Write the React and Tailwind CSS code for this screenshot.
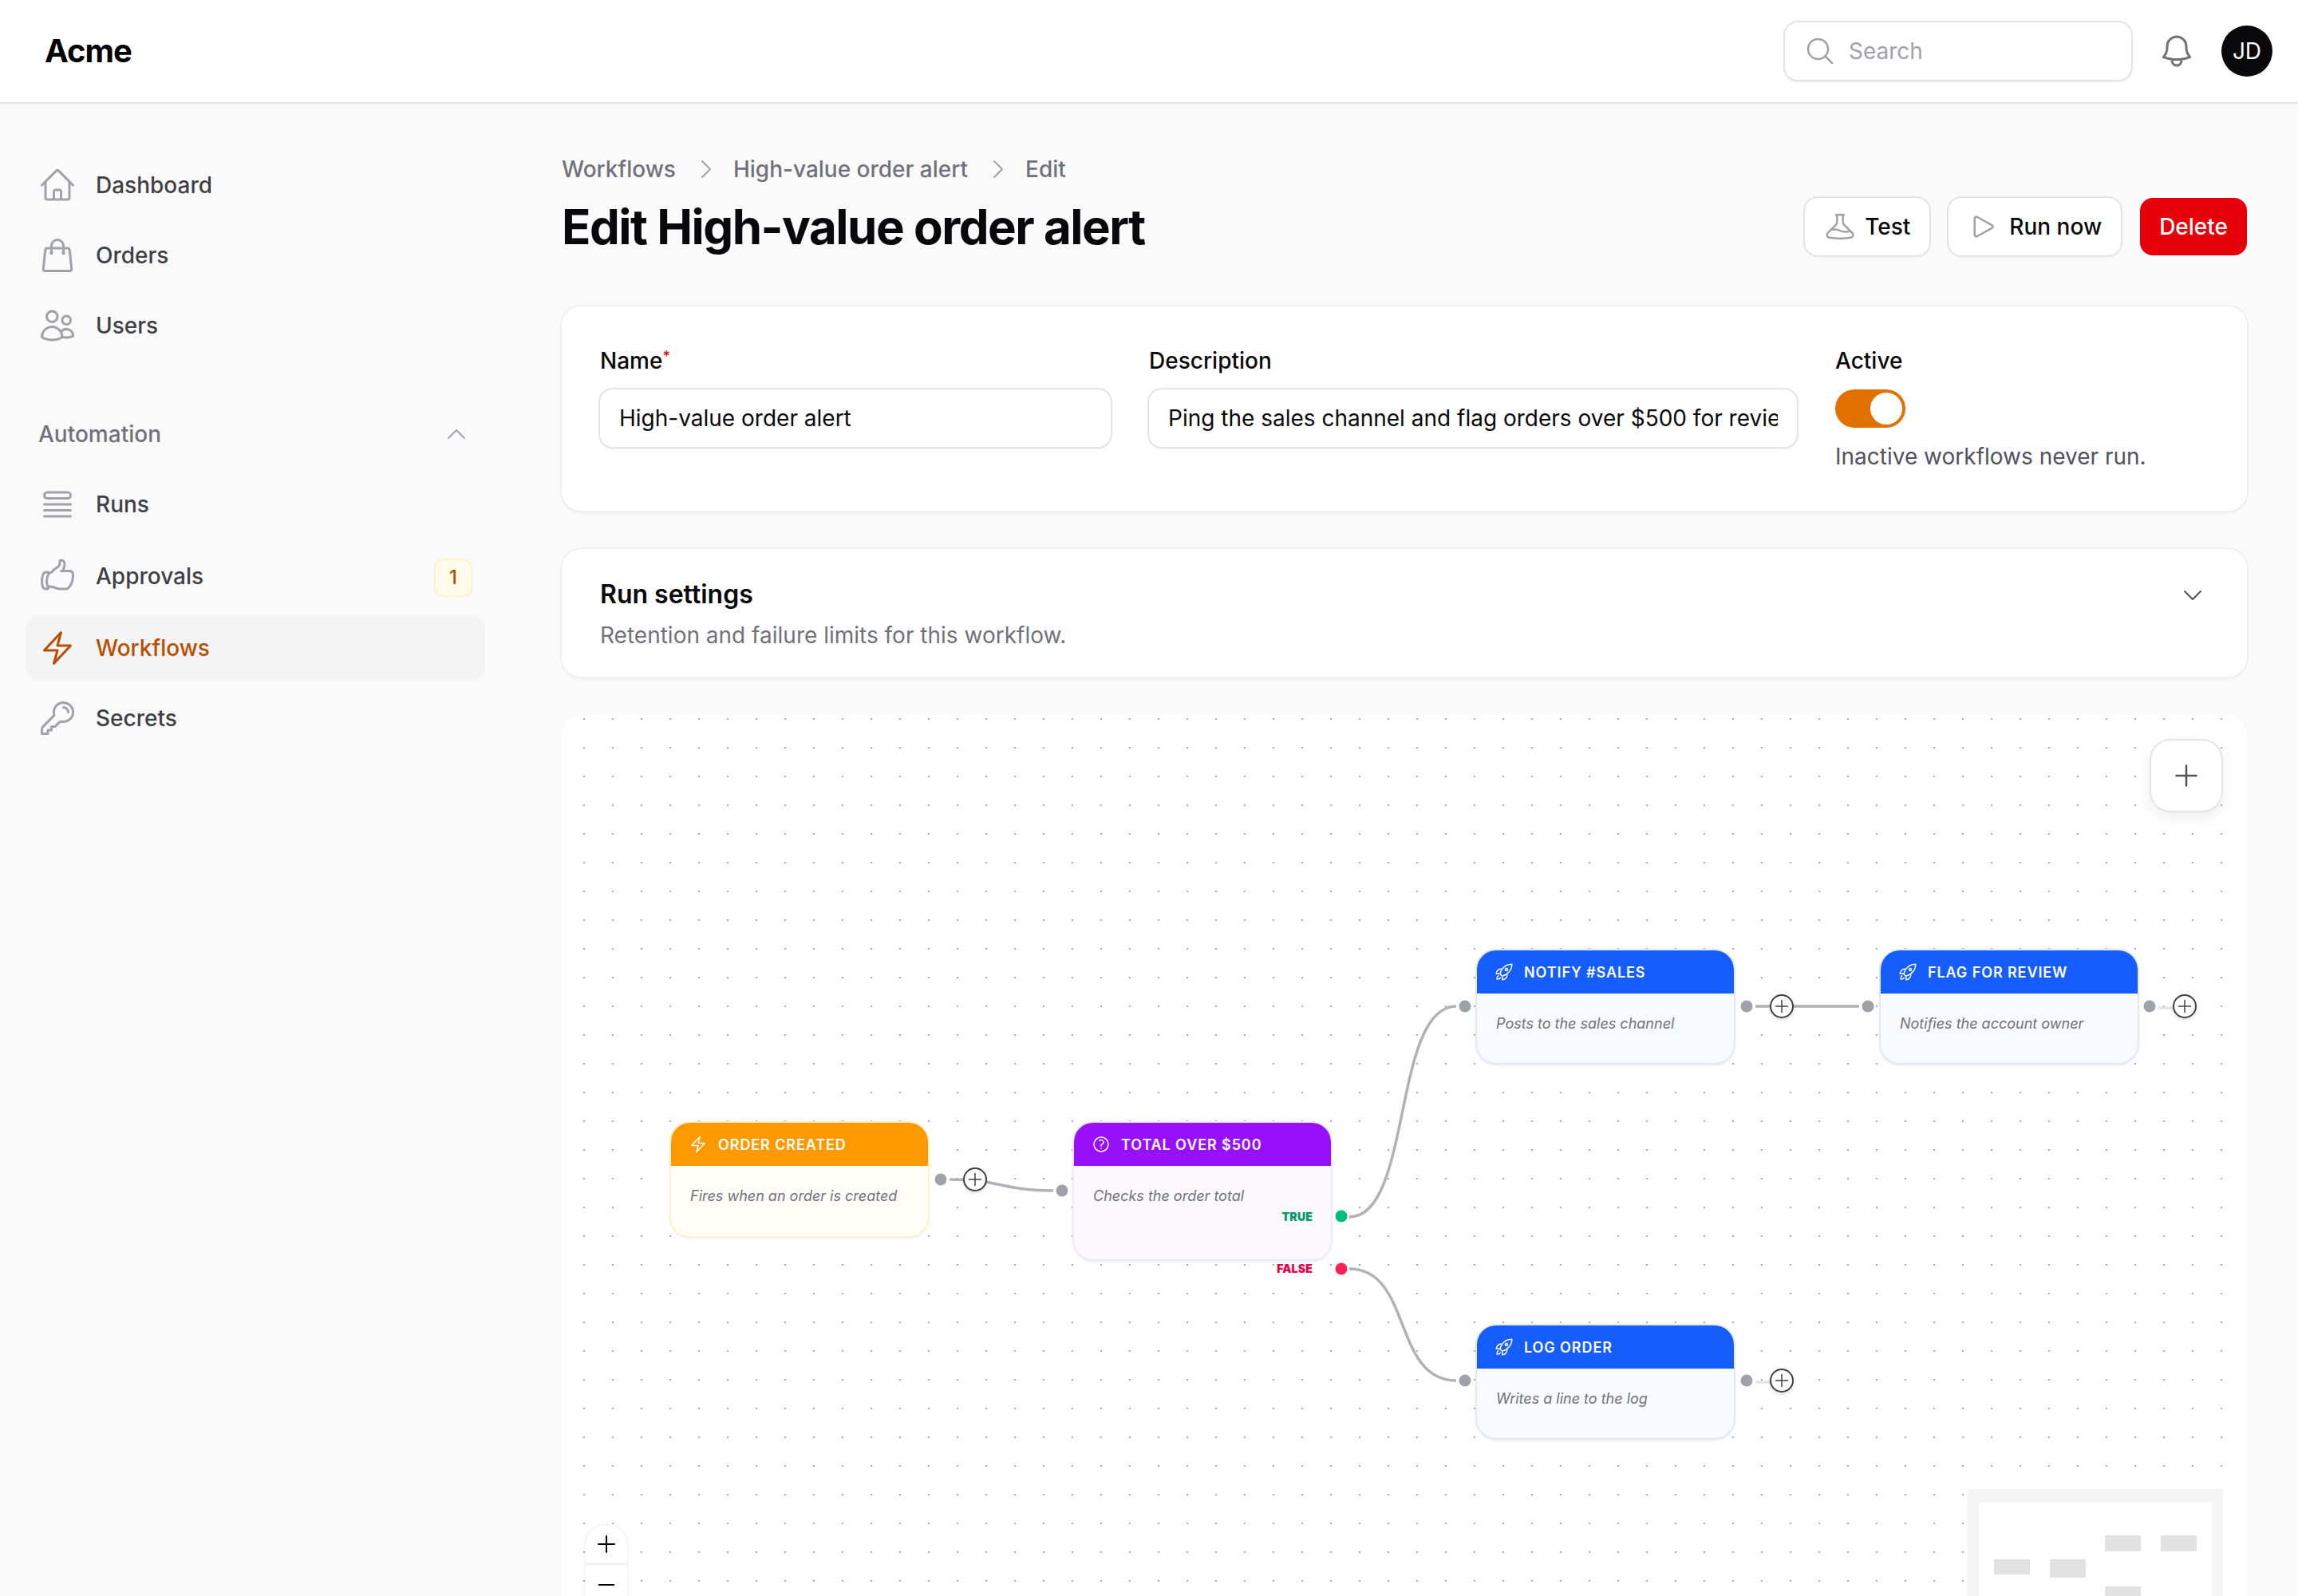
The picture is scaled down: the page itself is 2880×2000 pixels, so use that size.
import React from "react";
import {
  HiOutlineHome, HiOutlineShoppingBag, HiOutlineUsers, HiOutlineQueueList, HiOutlineHandThumbUp,
  HiOutlineBolt, HiOutlineKey, HiOutlineChevronUp, HiOutlineChevronDown, HiOutlineChevronRight,
  HiOutlineMagnifyingGlass, HiOutlineBell, HiOutlineBeaker, HiOutlinePlay, HiOutlineRocketLaunch,
  HiOutlineQuestionMarkCircle, HiOutlinePlus, HiOutlineMinus,
} from "react-icons/hi2";

function NavRow({ icon: Icon, label, active, badge, tall }) {
  return (
    <div className={`flex items-center gap-[24px] rounded-[16px] px-[16px] ${tall ? "h-[84px]" : "h-[80px]"} ${active ? "bg-[#f4f4f5] text-[#bb4d00]" : "text-[#3f3f46]"}`}>
      <Icon className={`h-[48px] w-[48px] shrink-0 ${active ? "text-[#bb4d00]" : "text-[#a1a1aa]"}`} />
      <span className="flex-1 text-[28px] font-medium leading-[40px]">{label}</span>
      {badge && (
        <span className="mr-[2px] mt-[4px] flex h-[44px] w-[44px] items-center justify-center rounded-[10px] bg-[#fffbeb] text-[24px] font-medium text-[#bb4d00] shadow-[0_0_0_2px_#fef3c6]">{badge}</span>
      )}
    </div>
  );
}

function Sidebar() {
  return (
    <aside className="flex w-[640px] shrink-0 flex-col gap-[8px] px-[32px] pt-[62px]">
      <NavRow icon={HiOutlineHome} label="Dashboard" />
      <NavRow icon={HiOutlineShoppingBag} label="Orders" />
      <NavRow icon={HiOutlineUsers} label="Users" />
      <div className="mt-[60px] flex h-[56px] items-center justify-between pl-[16px] pr-[20px] text-[28px] font-medium text-[#71717a]">
        <span>Automation</span>
        <HiOutlineChevronUp className="h-[32px] w-[32px] text-[#a1a1aa]" />
      </div>
      <div className="mt-[12px] flex flex-col gap-[8px]">
        <NavRow icon={HiOutlineQueueList} label="Runs" />
        <NavRow icon={HiOutlineHandThumbUp} label="Approvals" badge="1" tall />
        <NavRow icon={HiOutlineBolt} label="Workflows" active />
        <NavRow icon={HiOutlineKey} label="Secrets" />
      </div>
    </aside>
  );
}

function Node({ left, top, height, title, icon: Icon, text, header, body, ring }) {
  return (
    <div
      className={`absolute w-[322px] overflow-hidden rounded-[24px] ${body} ${ring}`}
      style={{ left, top, height }}
    >
      <div className={`flex h-[54px] items-center gap-[13px] px-[22px] text-white ${header}`}>
        <Icon className="h-[24px] w-[24px] shrink-0" />
        <span className="text-[18px] font-semibold uppercase tracking-[0.9px]">{title}</span>
      </div>
      <p className="px-[24px] pt-[26px] text-[18px] italic leading-[24px] text-[#71717a]">{text}</p>
    </div>
  );
}

const Dot = ({ x, y, color = "bg-[#a1a1aa]" }) => (
  <span className={`absolute h-[15px] w-[15px] -translate-x-1/2 -translate-y-1/2 rounded-full ${color}`} style={{ left: x, top: y }} />
);

const AddBtn = ({ x, y }) => (
  <span
    className="absolute flex h-[30px] w-[30px] -translate-x-1/2 -translate-y-1/2 items-center justify-center rounded-full border-2 border-[#3f3f46] bg-white text-[#3f3f46] shadow-[0_2px_4px_rgba(0,0,0,0.15)]"
    style={{ left: x, top: y }}
  >
    <HiOutlinePlus className="h-[24px] w-[24px]" />
  </span>
);

function Canvas() {
  const ox = 704;
  const oy = 896;
  const X = (v) => v - ox;
  const Y = (v) => v - oy;
  const blueRing = "shadow-[0_0_0_2px_#e2e9f4,0_2px_4px_rgba(0,0,0,0.15)]";
  return (
    <section className="relative mt-[48px] min-h-0 flex-1 overflow-hidden rounded-t-[24px] bg-white bg-[radial-gradient(circle,#a8a8ae_1px,transparent_1.2px)] bg-[size:36px_36px] bg-[position:10px_23px]">
      <svg className="absolute inset-0 h-full w-full" fill="none" stroke="#b1b1b7" strokeWidth="3.5">
        <path d={`M${X(1190)} ${Y(1478)} C${X(1255)} ${Y(1478)} ${X(1255)} ${Y(1492)} ${X(1320)} ${Y(1492)}`} />
        <path d={`M${X(1691)} ${Y(1525)} C${X(1770)} ${Y(1525)} ${X(1745)} ${Y(1261)} ${X(1825)} ${Y(1261)}`} />
        <path d={`M${X(1691)} ${Y(1590)} C${X(1770)} ${Y(1590)} ${X(1745)} ${Y(1730)} ${X(1825)} ${Y(1730)}`} />
        <path d={`M${X(2200)} ${Y(1261)} L${X(2330)} ${Y(1261)}`} />
        <path stroke="#e4e4e7" d={`M${X(2705)} ${Y(1263)} L${X(2725)} ${Y(1263)}`} />
        <path stroke="#e4e4e7" d={`M${X(2200)} ${Y(1732)} L${X(2220)} ${Y(1732)}`} />
      </svg>

      <Node left={X(841)} top={Y(1407)} height={142} title="Order created" icon={HiOutlineBolt} text="Fires when an order is created" header="bg-[#fe9a00]" body="bg-[#fffdf7]" ring="shadow-[0_0_0_2px_#fef3c6,0_2px_4px_rgba(0,0,0,0.15)]" />
      <Node left={X(1346)} top={Y(1407)} height={171} title="Total over $500" icon={HiOutlineQuestionMarkCircle} text="Checks the order total" header="bg-[#9810fa]" body="bg-[#fbf9ff]" ring="shadow-[0_0_0_2px_#ede9fe,0_2px_4px_rgba(0,0,0,0.15)]" />
      <Node left={X(1851)} top={Y(1191)} height={141} title="Notify #sales" icon={HiOutlineRocketLaunch} text="Posts to the sales channel" header="bg-[#155dfc]" body="bg-[#f7faff]" ring={blueRing} />
      <Node left={X(2357)} top={Y(1191)} height={141} title="Flag for review" icon={HiOutlineRocketLaunch} text="Notifies the account owner" header="bg-[#155dfc]" body="bg-[#f7faff]" ring={blueRing} />
      <Node left={X(1851)} top={Y(1661)} height={141} title="Log order" icon={HiOutlineRocketLaunch} text="Writes a line to the log" header="bg-[#155dfc]" body="bg-[#f7faff]" ring={blueRing} />

      <span className="absolute text-[14px] font-black leading-[16px] tracking-[0.2px] text-[#009966]" style={{ right: 2816 - 1645, top: Y(1517) }}>TRUE</span>
      <span className="absolute text-[14px] font-black leading-[16px] tracking-[0.2px] text-[#ec003f]" style={{ right: 2816 - 1645, top: Y(1582) }}>FALSE</span>

      <Dot x={X(1179)} y={Y(1478)} />
      <Dot x={X(1331)} y={Y(1492)} />
      <Dot x={X(1681)} y={Y(1524)} color="bg-[#00bc7d]" />
      <Dot x={X(1681)} y={Y(1590)} color="bg-[#ff2056]" />
      <Dot x={X(1836)} y={Y(1261)} />
      <Dot x={X(2189)} y={Y(1261)} />
      <Dot x={X(2341)} y={Y(1261)} />
      <Dot x={X(2694)} y={Y(1261)} />
      <Dot x={X(1836)} y={Y(1730)} />
      <Dot x={X(2189)} y={Y(1730)} />
      <AddBtn x={X(1222)} y={Y(1478)} />
      <AddBtn x={X(2233)} y={Y(1261)} />
      <AddBtn x={X(2738)} y={Y(1261)} />
      <AddBtn x={X(2233)} y={Y(1730)} />

      <button className="absolute right-[32px] top-[32px] flex h-[88px] w-[88px] items-center justify-center rounded-[24px] bg-white text-[#52525b] shadow-[0_0_0_2px_#e4e4e7,0_8px_20px_rgba(0,0,0,0.08)]">
        <HiOutlinePlus className="h-[40px] w-[40px]" />
      </button>

      <div className="absolute left-[30px] top-[1015px] flex w-[52px] flex-col overflow-hidden rounded-t-[24px] bg-white shadow-[0_0_4px_rgba(0,0,0,0.12)]">
        <div className="flex h-[50px] items-center justify-center border-b-2 border-[#eeeeee]"><HiOutlinePlus className="h-[32px] w-[32px] text-black" /></div>
        <div className="flex h-[50px] items-center justify-center"><HiOutlineMinus className="h-[32px] w-[32px] text-black" /></div>
      </div>

      <div className="absolute left-[1762px] top-[970px] h-[200px] w-[320px] bg-[#f5f5f5] px-[14px] pt-[17px]">
        <div className="relative h-full w-full bg-white">
          <span className="absolute left-[19px] top-[71px] h-[19px] w-[45px] rounded-[1px] bg-[#e2e2e2]" />
          <span className="absolute left-[89px] top-[71px] h-[23px] w-[45px] rounded-[1px] bg-[#e2e2e2]" />
          <span className="absolute left-[158px] top-[41px] h-[20px] w-[45px] rounded-[1px] bg-[#e2e2e2]" />
          <span className="absolute left-[228px] top-[41px] h-[20px] w-[45px] rounded-[1px] bg-[#e2e2e2]" />
          <span className="absolute left-[158px] top-[105px] h-[20px] w-[45px] rounded-[1px] bg-[#e2e2e2]" />
        </div>
      </div>
    </section>
  );
}

export default function App() {
  return (
    <div className="flex h-screen flex-col overflow-hidden bg-[#fafafa] font-['Inter',sans-serif] text-[#09090b] antialiased">
      <header className="flex h-[130px] shrink-0 items-center border-b-2 border-[#e4e4e7] bg-white pl-[56px] pr-[32px]">
        <span className="flex-1 text-[40px] font-bold tracking-[-1px] text-black">Acme</span>
        <div className="flex h-[72px] w-[434px] items-center gap-[16px] rounded-[16px] bg-white px-[24px] shadow-[0_0_0_2px_#e4e4e7,0_2px_3px_rgba(0,0,0,0.15)]">
          <HiOutlineMagnifyingGlass className="h-[40px] w-[40px] text-[#a1a1aa]" />
          <span className="text-[28px] text-[#a1a1aa]">Search</span>
        </div>
        <HiOutlineBell className="ml-[33px] h-[48px] w-[48px] text-[#71717a]" />
        <div className="ml-[32px] flex h-[64px] w-[64px] items-center justify-center rounded-full bg-[#09090b] text-[28px] text-white">JD</div>
      </header>

      <div className="flex min-h-0 flex-1">
        <Sidebar />
        <main className="flex min-w-0 flex-1 flex-col pl-[64px] pr-[64px] pt-[62px]">
          <nav className="flex h-[40px] items-center gap-[20px] text-[28px] font-medium text-[#71717a]">
            <span>Workflows</span>
            <HiOutlineChevronRight className="-mr-[2px] ml-[2px] h-[32px] w-[32px] text-[#a1a1aa]" />
            <span>High-value order alert</span>
            <HiOutlineChevronRight className="-mr-[2px] ml-[2px] h-[32px] w-[32px] text-[#a1a1aa]" />
            <span>Edit</span>
          </nav>
          <div className="mt-[16px] flex items-center justify-between">
            <h1 className="text-[60px] font-bold leading-[72px] tracking-[-1.5px] text-[#09090b]">Edit High-value order alert</h1>
            <div className="flex items-center gap-[24px]">
              <button className="flex h-[72px] items-center gap-[11px] rounded-[16px] bg-white px-[24px] text-[28px] font-medium shadow-[0_0_0_2px_#e4e4e7]">
                <HiOutlineBeaker className="h-[40px] w-[40px] text-[#a1a1aa]" />Test
              </button>
              <button className="flex h-[72px] items-center gap-[12px] rounded-[16px] bg-white px-[24px] text-[28px] font-medium shadow-[0_0_0_2px_#e4e4e7]">
                <HiOutlinePlay className="h-[40px] w-[40px] text-[#a1a1aa]" />Run now
              </button>
              <button className="flex h-[72px] items-center rounded-[16px] bg-[#e7000b] px-[24px] text-[28px] font-medium text-white">Delete</button>
            </div>
          </div>

          <section className="mt-[64px] grid h-[256px] shrink-0 grid-cols-[640px_812px_1fr] gap-x-[48px] rounded-[24px] bg-white p-[48px] shadow-[0_0_0_2px_#f0f0f1,0_2px_3px_rgba(0,0,0,0.12)]">
            <div className="flex flex-col">
              <label className="text-[28px] font-medium leading-[40px]">Name<sup className="text-[18px] text-[#e7000b]">*</sup></label>
              <input readOnly value="High-value order alert" className="mt-[16px] h-[72px] w-full rounded-[16px] bg-white px-[24px] text-[28px] shadow-[0_0_0_2px_#e4e4e7,0_2px_3px_rgba(0,0,0,0.15)] outline-none" />
            </div>
            <div className="flex flex-col">
              <label className="text-[28px] font-medium leading-[40px]">Description</label>
              <input readOnly value="Ping the sales channel and flag orders over $500 for review" className="mt-[16px] h-[72px] w-full rounded-[16px] bg-white px-[24px] text-[28px] shadow-[0_0_0_2px_#e4e4e7,0_2px_3px_rgba(0,0,0,0.15)] outline-none" />
            </div>
            <div className="flex flex-col">
              <label className="text-[28px] font-medium leading-[40px]">Active</label>
              <div className="mt-[16px] flex h-[48px] w-[88px] items-center justify-end rounded-full bg-[#e17100] pr-[4px]">
                <span className="h-[40px] w-[40px] rounded-full bg-white" />
              </div>
              <p className="mt-[16px] text-[28px] leading-[40px] text-[#52525b]">Inactive workflows never run.</p>
            </div>
          </section>

          <section className="mt-[48px] flex h-[160px] shrink-0 items-start justify-between rounded-[24px] bg-white px-[48px] pt-[33px] shadow-[0_0_0_2px_#f0f0f1,0_2px_3px_rgba(0,0,0,0.12)]">
            <div>
              <h2 className="text-[32px] font-semibold leading-[48px]">Run settings</h2>
              <p className="mt-[7px] text-[28px] leading-[40px] text-[#71717a]">Retention and failure limits for this workflow.</p>
            </div>
            <HiOutlineChevronDown className="mr-[4px] mt-[9px] h-[32px] w-[32px] text-[#52525b]" />
          </section>

          <Canvas />
        </main>
      </div>
    </div>
  );
}
